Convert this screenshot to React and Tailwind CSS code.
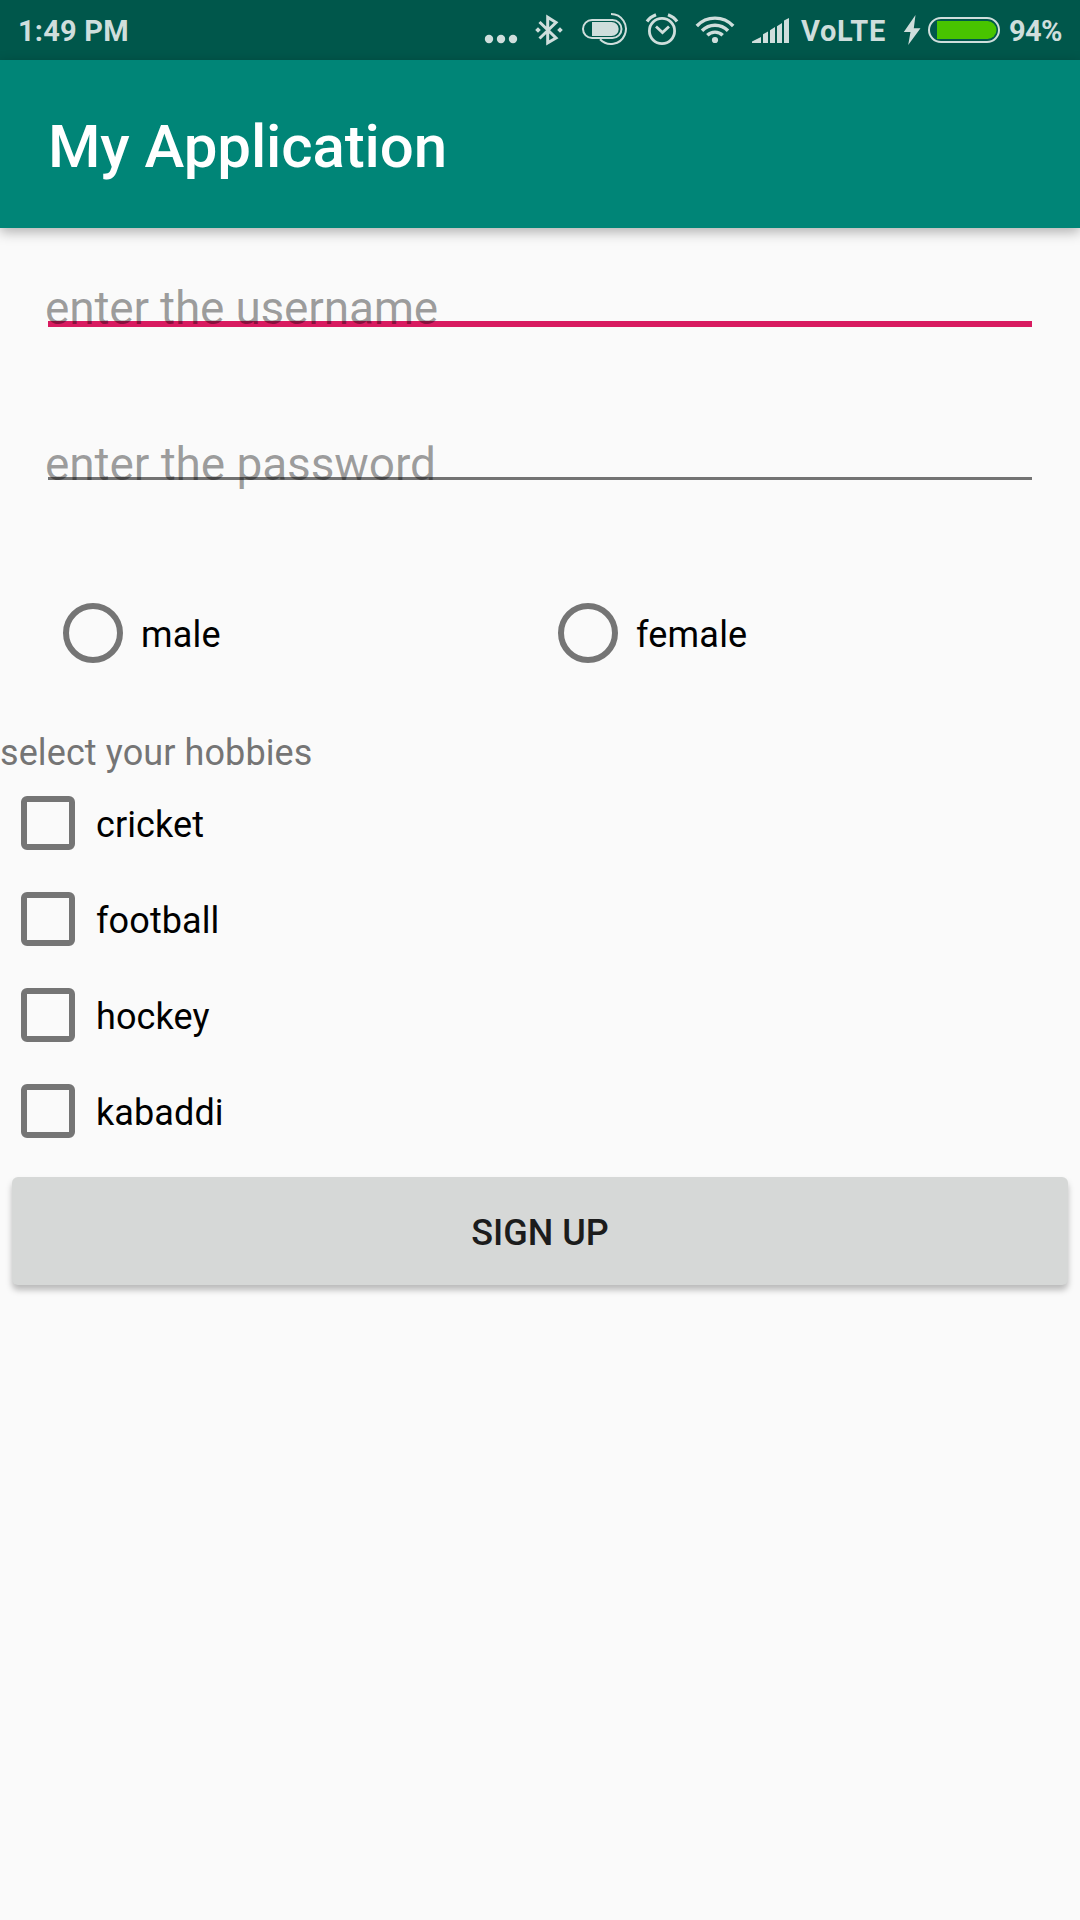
import React from "react";

const INK = "#cfdedc";

function DotsIcon() {
  return (
    <svg className="h-[60px] w-9 shrink-0" viewBox="483 0 36 60" fill={INK}>
      <circle cx="489" cy="39" r="4.2" />
      <circle cx="501" cy="39" r="4.2" />
      <circle cx="513" cy="39" r="4.2" />
    </svg>
  );
}

function BluetoothIcon() {
  return (
    <svg className="ml-[14px] h-[60px] w-8 shrink-0" viewBox="533 0 32 60" fill="none">
      <path d="M539.5 22 L556 38 L547.7 42.8 V17.2 L556 22.5 L539.5 38.5" stroke={INK} strokeWidth="3" />
      <path d="M538 27.2 l2.8 2.8 l-2.8 2.8 l-2.8 -2.8z M560 27.2 l2.8 2.8 l-2.8 2.8 l-2.8 -2.8z" fill={INK} />
    </svg>
  );
}

function BatterySaverIcon() {
  return (
    <svg className="ml-[15px] h-[60px] w-12 shrink-0" viewBox="580 0 48 60" fill="none">
      <rect x="583" y="20" width="38.5" height="18" rx="9" stroke={INK} strokeWidth="2" />
      <path d="M592 22 H611.5 a7.2 7 0 0 1 0 14 H592z" fill={INK} />
      <path d="M611 14 A15 15 0 1 1 600 39.3" stroke={INK} strokeWidth="2" />
    </svg>
  );
}

function AlarmIcon() {
  return (
    <svg className="ml-4 h-[60px] w-9 shrink-0" viewBox="644 0 36 60" fill="none" stroke={INK}>
      <circle cx="662" cy="31" r="12.6" strokeWidth="2.8" />
      <path d="M656 26.5 L662.5 32.5 L669 26.5" strokeWidth="2.8" />
      <path d="M647 21.5 Q650 17 656 14.7 M668 14.7 Q674 17 677 21.5" strokeWidth="3.2" />
    </svg>
  );
}

function WifiIcon() {
  return (
    <svg className="ml-[14px] h-[60px] w-[42px] shrink-0" viewBox="694 0 42 60" fill="none" stroke={INK} strokeWidth="3.4">
      <path d="M696.8 26 A25 25 0 0 1 733.2 26" />
      <path d="M702 30.8 A18 18 0 0 1 728 30.8" />
      <path d="M707.3 35.3 A11 11 0 0 1 722.7 35.3" />
      <circle cx="715" cy="40" r="3.1" fill={INK} stroke="none" />
    </svg>
  );
}

function SignalIcon() {
  return (
    <svg className="ml-[14px] h-[60px] w-10 shrink-0" viewBox="750 0 40 60" fill={INK}>
      <path d="M752 43 V41.4 L761 37 V43z M763 43 V34.2 L768 31.6 V43z M770 43 V30.2 L775 27 V43z M777 43 V26.2 L782 23 V43z M784 43 V20.5 L789 18 V43z" />
    </svg>
  );
}

function BoltIcon() {
  return (
    <svg className="absolute left-[902px] top-0 h-[60px] w-5" viewBox="902 0 20 60" fill={INK}>
      <path d="M915.5 15 L903.8 32 H910.5 L908.2 45 L920.5 28.2 H913.8z" />
    </svg>
  );
}

function BatteryIcon() {
  return (
    <svg className="absolute left-[926px] top-0 h-[60px] w-[76px]" viewBox="926 0 76 60" fill="none">
      <rect x="929" y="18" width="70" height="24" rx="12" stroke={INK} strokeWidth="2" />
      <path d="M937 21 H987.5 a9 9 0 0 1 0 18 H937z" fill="#48c400" />
    </svg>
  );
}

function StatusBar() {
  return (
    <div className="relative flex h-[60px] bg-[#00574b] text-[29px] font-bold leading-[62px] text-[#cfdedc]">
      <span className="w-[483px] shrink-0 pl-[18px] tracking-[0.2px]">1:49 PM</span>
      <DotsIcon />
      <BluetoothIcon />
      <BatterySaverIcon />
      <AlarmIcon />
      <WifiIcon />
      <SignalIcon />
      <span className="ml-[11px] tracking-[0.7px]">VoLTE</span>
      <BoltIcon />
      <BatteryIcon />
      <span className="absolute left-[1009px] top-0 tracking-[-0.7px]">94%</span>
    </div>
  );
}

function Radio({ label }) {
  return (
    <label className="flex w-[495px] items-center">
      <span className="h-[60px] w-[60px] rounded-full border-[6px] border-[#757575]" />
      <span className="ml-[18px] pt-1 tracking-[0.2px]">{label}</span>
    </label>
  );
}

function Checkbox({ label }) {
  return (
    <label className="flex h-24 items-center pl-[21px]">
      <span className="h-[54px] w-[54px] rounded-[6px] border-[6px] border-[#757575]" />
      <span className="ml-[21px] pt-1 tracking-[0.1px]">{label}</span>
    </label>
  );
}

export default function App() {
  return (
    <div className="flex h-[1920px] w-[1080px] flex-col overflow-hidden bg-[#fafafa] font-['Roboto',sans-serif] text-[36px] leading-[42px] text-black">
      <StatusBar />
      <header className="relative flex h-[168px] items-center bg-[#008577] pl-12 text-[60px] font-medium leading-[70px] text-white shadow-[0_4px_12px_rgba(0,0,0,0.3)]">
        <h1 className="pt-[5px] tracking-[-0.1px]">My Application</h1>
      </header>
      <div className="mx-12 mt-[53px] flex h-[46px] flex-col justify-end border-b-[6px] border-[#d81b60]">
        <span className="relative -left-[3px] top-[14px] text-[46px] leading-[54px] tracking-[-0.2px] text-black/38">enter the username</span>
      </div>
      <div className="mx-12 mt-[107px] flex h-[46px] flex-col justify-end border-b-[3px] border-[#737373]">
        <span className="relative -left-[3px] top-[14px] text-[46px] leading-[54px] tracking-[-0.1px] text-black/38">enter the password</span>
      </div>
      <div className="mt-[123px] flex pl-[63px]">
        <Radio label="male" />
        <Radio label="female" />
      </div>
      <p className="mt-[69px] tracking-[0.1px] text-[#757575]">select your hobbies</p>
      <div className="mt-[1px] flex flex-col">
        <Checkbox label="cricket" />
        <Checkbox label="football" />
        <Checkbox label="hockey" />
        <Checkbox label="kabaddi" />
      </div>
      <button className="mx-3 mt-[18px] h-[108px] rounded-[6px] bg-[#d6d8d7] pt-1 font-medium text-[#1c1c1c] shadow-[0_5px_6px_rgba(0,0,0,0.26)]">
        SIGN UP
      </button>
    </div>
  );
}
